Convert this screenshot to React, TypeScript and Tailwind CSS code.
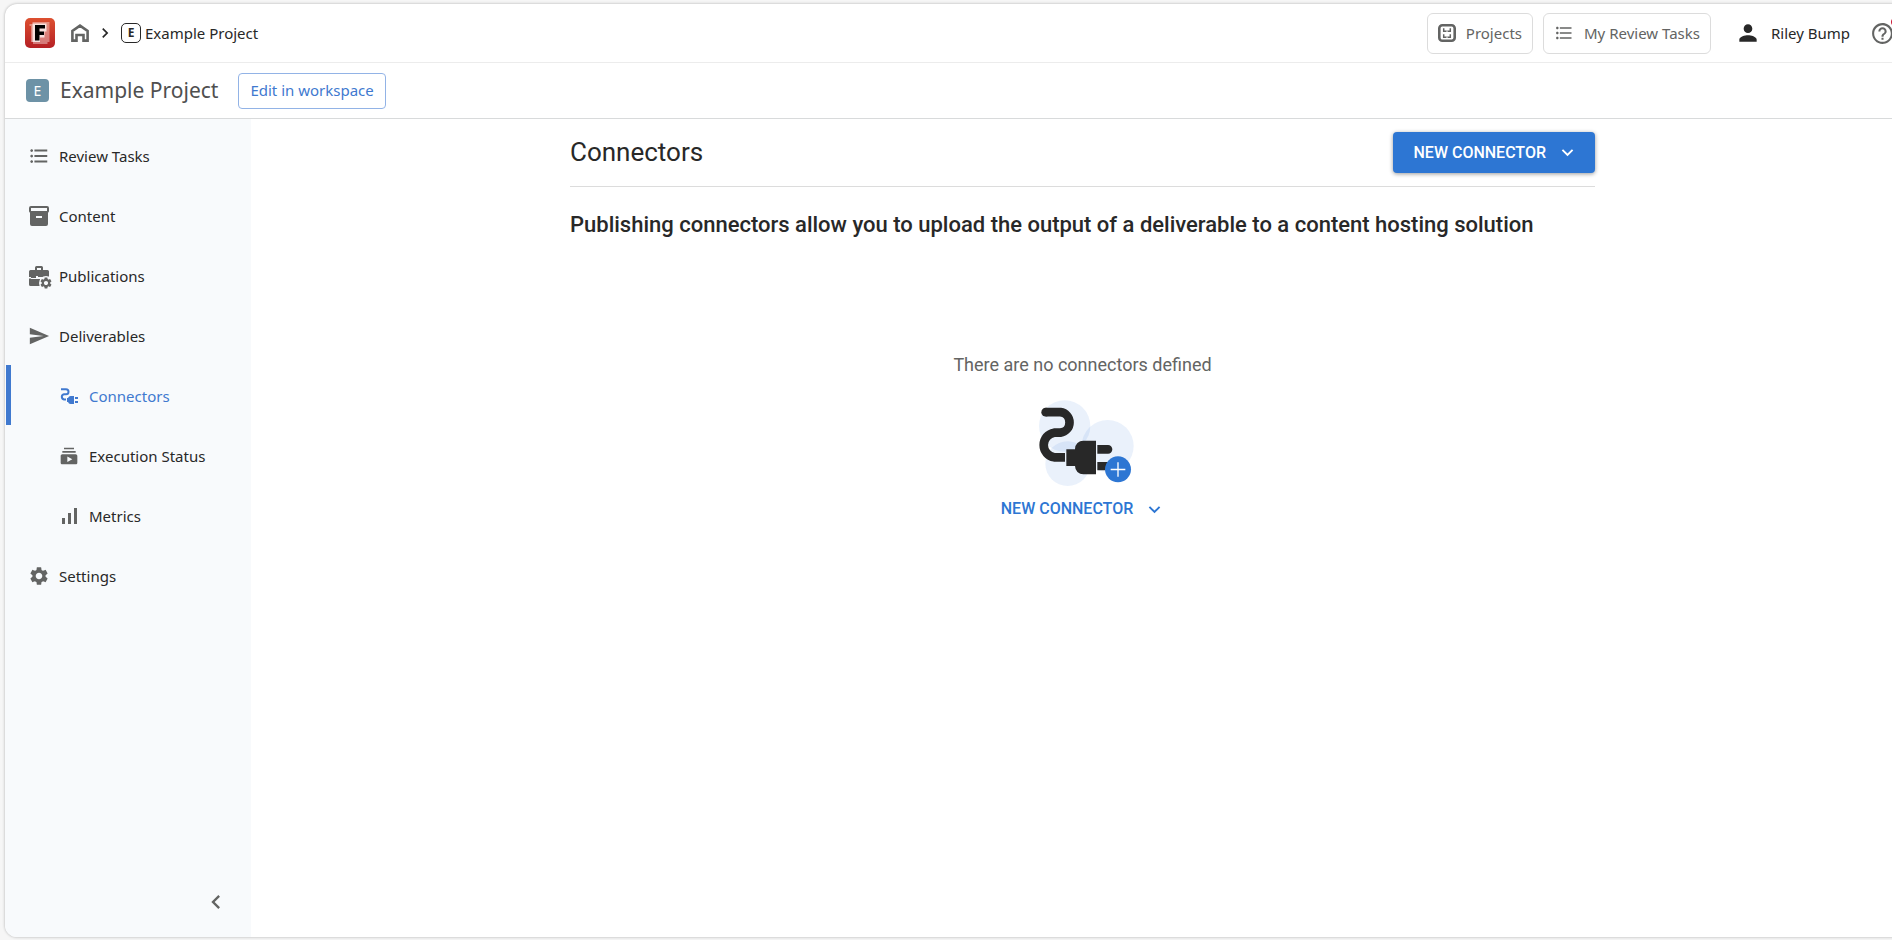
import {
  MdChevronLeft, MdChevronRight, MdFormatListBulleted, MdHelpOutline,
  MdKeyboardArrowDown, MdPerson, MdSend, MdSettings, MdSignalCellularAlt, MdSubscriptions,
} from "react-icons/md";
import type { ReactNode } from "react";

function Logo() {
  return (
    <svg viewBox="0 0 30 30" className="size-[30px]" aria-label="Home page" role="img">
      <defs>
        <linearGradient id="logo-red" x1="0" y1="0" x2="0" y2="1">
          <stop offset="0" stopColor="#dd5030" />
          <stop offset="1" stopColor="#b52025" />
        </linearGradient>
      </defs>
      <rect width="30" height="30" rx="5" fill="url(#logo-red)" />
      <path d="M4.500 6h3V4h17v20h-2v2H8v-2H6V8H4.500z" fill="#fff" opacity=".38" />
      <path d="M7.500 5.500h14v8h-2v6h-4.500v4.500H7.500z" fill="#fff" opacity=".75" />
      <path d="M10 7h10v3.500h-5.500v3h4.500v3.500h-4.500v5.500H10z" fill="#000" />
    </svg>
  );
}

function HomeIcon() {
  return (
    <svg viewBox="0 0 18 18" className="size-[18px]" aria-hidden="true">
      <path d="M1.400 16.600V6.900L9 1.600l7.600 5.300v9.700h-4.100v-5.600h-7v5.600z" fill="none" stroke="#636463" strokeWidth="2.600" />
    </svg>
  );
}

function ProjectsIcon() {
  return (
    <svg viewBox="0 0 18 18" className="size-[18px]" aria-hidden="true" fill="none" stroke="#636463">
      <rect x="1.300" y="1.300" width="15.400" height="15.400" rx="3" strokeWidth="2.600" />
      <path d="M5.700 4.200v3h6.600v-3M5.700 10.200v3h6.600v-3" strokeWidth="1.500" />
      <path d="M8 7.200h2M8 13.200h2" stroke="#fff" strokeWidth="1.500" opacity=".5" />
    </svg>
  );
}

function ContentIcon() {
  return (
    <svg viewBox="0 0 20 20" className="size-5" aria-hidden="true">
      <path
        d="M2 0h16a2 2 0 0 1 2 2v3a2 2 0 0 1-1 1.700V18a2 2 0 0 1-2 2H3a2 2 0 0 1-2-2V6.700A2 2 0 0 1 0 5V2a2 2 0 0 1 2-2zM2 2v3h16V2zM7 10v2h6v-2z"
        fill="currentColor"
        fillRule="evenodd"
      />
    </svg>
  );
}

function CordIcon() {
  return (
    <svg viewBox="0 0 18 16" className="h-4 w-[18px]" aria-hidden="true">
      <path d="M1 1.200H6A2.300 2.300 0 0 1 6 6.200H4A2.700 2.700 0 0 0 4 11.500H6" fill="none" stroke="currentColor" strokeWidth="2" />
      <path d="M7 10h1a3 3 0 0 1 3-2h3v8h-3a3 3 0 0 1-3-2H7zM15 9h3v2h-3zM15 13h3v2h-3z" fill="currentColor" />
    </svg>
  );
}

function PublicationsIcon() {
  return (
    <span className="relative block size-5">
      <svg viewBox="0 0 20 20" className="size-5" aria-hidden="true" fill="currentColor">
        <path d="M6 4V1.500A1.500 1.500 0 0 1 7.500 0h5A1.500 1.500 0 0 1 14 1.500V4h4.500A1.500 1.500 0 0 1 20 5.500V11H9v-1H7v2H2v-1H0V5.500A1.500 1.500 0 0 1 1.500 4zM8 2v2h4V2zM0 12.500h2V13h9v7H1.500A1.500 1.500 0 0 1 0 18.500z" />
      </svg>
      <span className="absolute -right-1 -bottom-1 rounded-full bg-[#f8fafc]">
        <MdSettings className="size-[14px]" />
      </span>
    </span>
  );
}

function ConnectorArt() {
  return (
    <svg viewBox="290 176 300 264" className="h-[88px] w-[100px]" aria-hidden="true">
      <g fill="#2d76d3">
        <circle cx="376" cy="257" r="77" opacity=".1" />
        <circle cx="505" cy="317" r="78" opacity=".1" />
        <circle cx="385" cy="370" r="67" opacity=".1" />
      </g>
      <g fill="#282828">
        <circle cx="319" cy="215.500" r="13" />
        <path d="M319 215.500H363.500A31 31 0 0 1 363.500 277H344.500A37.500 37.500 0 0 0 344.500 351H377" fill="none" stroke="#282828" strokeWidth="26" />
        <path d="M381 327h26v-1a25 25 0 0 1 25-25h38v101h-38a25 25 0 0 1-25-25h-26z" />
        <path d="M474 314h32a13 13 0 0 1 0 26h-32zM474 365h40v25h-40z" />
      </g>
      <circle cx="536" cy="387" r="39" fill="#2d76d3" />
      <path d="M536 366v43M514 387.500h44" stroke="#fff" strokeWidth="4" />
    </svg>
  );
}

type Item = { label: string; icon: ReactNode; nested?: boolean; active?: boolean };

const items: Item[] = [
  { label: "Review Tasks", icon: <MdFormatListBulleted className="size-[22px]" /> },
  { label: "Content", icon: <ContentIcon /> },
  { label: "Publications", icon: <PublicationsIcon /> },
  { label: "Deliverables", icon: <MdSend className="size-[22px]" /> },
  { label: "Connectors", icon: <CordIcon />, nested: true, active: true },
  { label: "Execution Status", icon: <MdSubscriptions className="size-5" />, nested: true },
  { label: "Metrics", icon: <MdSignalCellularAlt className="size-6" />, nested: true },
  { label: "Settings", icon: <MdSettings className="size-[22px]" /> },
];

function NavItem({ label, icon, nested, active }: Item) {
  return (
    <li>
      <a
        href="#"
        aria-current={active ? "page" : undefined}
        className={`flex h-[60px] items-center gap-2 border-l-[5px] pt-0.5 ${nested ? "pl-[46px]" : "pl-4"} ${
          active ? "border-[#4079cf] text-[#4079cf]" : "border-transparent text-[#282828]"
        }`}
      >
        <span className={`flex w-6 shrink-0 justify-center ${active ? "" : "text-[#636463]"}`}>{icon}</span>
        {label}
      </a>
    </li>
  );
}

export default function App() {
  return (
    <div className="flex min-h-screen overflow-hidden bg-[#f6f6f6] pt-1 pb-[3px] pl-[5px] font-['Noto_Sans',sans-serif] text-[15px] text-[#282828]">
      <div className="-mr-[22px] flex flex-1 flex-col overflow-hidden rounded-xl bg-white shadow-[0_0_3px_rgba(0,0,0,0.3)]">
        <header className="flex h-[59px] items-center justify-between border-b border-[#ececec] pr-[19px] pl-5">
          <nav aria-label="Breadcrumb" className="flex items-center">
            <a href="#"><Logo /></a>
            <a href="#" aria-label="Home" className="ml-4"><HomeIcon /></a>
            <MdChevronRight className="mx-1.5 size-5" />
            <a href="#" className="flex items-center gap-1">
              <span className="flex size-5 items-center justify-center rounded-[5px] border border-[#282828] text-xs font-bold">E</span>
              Example Project
            </a>
          </nav>
          <div className="flex items-center text-[#636463]">
            <button className="flex h-[41px] items-center gap-2.5 rounded-md border border-[#dcdcdc] px-2.5">
              <ProjectsIcon />
              Projects
            </button>
            <button className="ml-2.5 flex h-[41px] items-center gap-2.5 rounded-md border border-[#dcdcdc] px-2.5">
              <MdFormatListBulleted className="size-5" />
              My Review Tasks
            </button>
            <button className="ml-6 flex items-center gap-2.5 text-[#282828]">
              <MdPerson className="size-[26px]" />
              Riley Bump
            </button>
            <button aria-label="Help" className="relative ml-5">
              <MdHelpOutline className="size-[25px]" />
              <span className="absolute -top-1 -right-1.5 size-2.5 rounded-full bg-[#c8102e]" />
            </button>
          </div>
        </header>
        <div className="flex h-14 items-center border-b border-[#d8dadb] px-[21px]">
          <span className="flex size-[23px] items-center justify-center rounded bg-[#6d92a6] text-sm text-white">E</span>
          <h1 className="ml-[11px] text-[21px] text-[#4f4f4f]">Example Project</h1>
          <button className="ml-5 h-9 rounded border border-[#92b3e6] px-[11px] text-[#4079cf]">Edit in workspace</button>
        </div>
        <div className="flex flex-1">
          <aside className="flex w-[246px] shrink-0 flex-col justify-between bg-[#f8fafc] pt-1.5 pl-px">
            <ul>
              {items.map((item) => (
                <NavItem key={item.label} {...item} />
              ))}
            </ul>
            <button aria-label="Collapse menu" className="mr-[21px] mb-[21px] self-end text-[#636463]">
              <MdChevronLeft className="size-7" />
            </button>
          </aside>
          <main className="flex-1 font-[Roboto,sans-serif]">
            <div className="mx-auto flex max-w-[1025px] flex-col">
              <div className="flex h-[68px] items-center justify-between border-b border-[#dcdcdc]">
                <h2 className="text-[26px]">Connectors</h2>
                <button className="flex h-[41px] items-center gap-2.5 rounded bg-[#2d76d3] pr-4 pl-5 text-base font-medium text-white shadow-[0_1px_4px_rgba(0,0,0,0.4)]">
                  NEW CONNECTOR
                  <MdKeyboardArrowDown className="size-[23px]" />
                </button>
              </div>
              <p className="mt-[21px] text-[22px] font-medium">
                Publishing connectors allow you to upload the output of a deliverable to a content hosting solution
              </p>
              <section className="mt-[110px] flex flex-col items-center">
                <p className="text-lg text-[#636463]">There are no connectors defined</p>
                <div className="mt-5 ml-1.5"><ConnectorArt /></div>
                <button className="mt-2.5 ml-0.5 flex items-center gap-2.5 text-base font-medium text-[#2d76d3]">
                  NEW CONNECTOR
                  <MdKeyboardArrowDown className="size-[23px]" />
                </button>
              </section>
            </div>
          </main>
        </div>
      </div>
    </div>
  );
}
